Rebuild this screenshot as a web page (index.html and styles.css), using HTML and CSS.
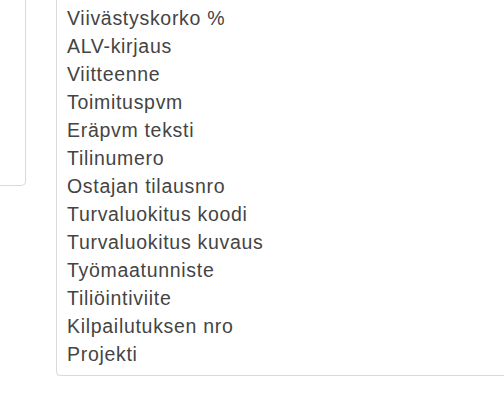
FILE: index.html
```html
<!DOCTYPE html>
<html>
<head>
<meta charset="utf-8">
<link rel="stylesheet" href="styles.css">
</head>
<body>
<div class="page">
  <div class="side-box"></div>
  <ul class="field-list">
    <li>Viivästyskorko %</li>
    <li>ALV-kirjaus</li>
    <li>Viitteenne</li>
    <li>Toimituspvm</li>
    <li>Eräpvm teksti</li>
    <li>Tilinumero</li>
    <li>Ostajan tilausnro</li>
    <li>Turvaluokitus koodi</li>
    <li>Turvaluokitus kuvaus</li>
    <li>Työmaatunniste</li>
    <li>Tiliöintiviite</li>
    <li>Kilpailutuksen nro</li>
    <li>Projekti</li>
  </ul>
</div>
</body>
</html>
```
FILE: styles.css
```css
html, body {
  margin: 0;
  padding: 0;
  background: #fff;
}
.page {
  display: flex;
  align-items: flex-start;
  gap: 30px;
  font-family: "Liberation Sans", Arial, sans-serif;
}
.side-box {
  width: 26px;
  height: 186px;
  border: 1px solid #d9d9d9;
  border-left: none;
  border-top: none;
  border-bottom-right-radius: 5px;
  box-sizing: border-box;
}
.field-list {
  list-style: none;
  margin: 0;
  padding: 4px 0 7px 10px;
  flex: 1;
  border: 1px solid #d9d9d9;
  border-top: none;
  border-right: none;
  border-bottom-left-radius: 5px;
  box-shadow: 0 1px 0 #e8e8e8;
}
.field-list li {
  font-size: 19.5px;
  line-height: 28px;
  color: #444;
  letter-spacing: 0.7px;
}
```
